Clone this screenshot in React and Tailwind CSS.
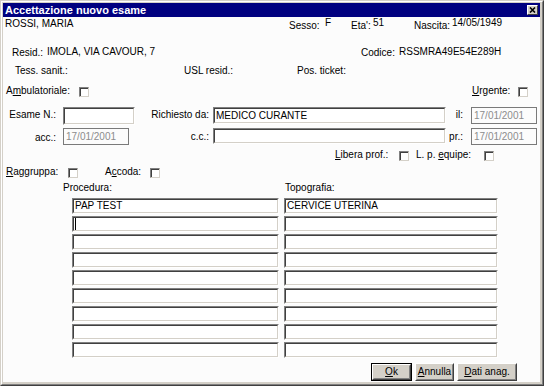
import React from 'react';

// Win2000-style "new exam" acceptance dialog

const Sunken = ({ className = '', children }) => (
    <div className={`shrink-0 border border-t-[#808080] border-l-[#808080] border-r-white border-b-white ${className}`}>
        <div className="h-full flex items-center pl-px overflow-hidden whitespace-nowrap bg-white border border-t-[#404040] border-l-[#404040] border-r-[#d4d0c8] border-b-[#d4d0c8]">
            {children}
        </div>
    </div>
);

const DateBox = ({ className = '' }) => (
    <div className={`shrink-0 flex items-center pl-[2px] border border-[#7a7a7a] bg-[#fcfcfc] text-[#8c8c8c] ${className}`}>
        17/01/2001
    </div>
);

const Check = ({ className = '' }) => (
    <span className={`block shrink-0 w-[10px] h-[10px] bg-white border border-t-[#808080] border-l-[#808080] border-r-[#d4d0c8] border-b-[#d4d0c8] shadow-[inset_1px_1px_0_#404040] ${className}`} />
);

const Button = ({ width, isDefault, children }) => (
    <div className={`shrink-0 h-[18px] ${width} ${isDefault ? 'border border-black' : ''}`}>
        <div className="h-full border border-t-white border-l-white border-r-[#404040] border-b-[#404040] bg-[#d4d0c8]">
            <div className="h-full flex items-center justify-center border border-t-[#d4d0c8] border-l-[#d4d0c8] border-r-[#808080] border-b-[#808080]">
                {children}
            </div>
        </div>
    </div>
);

const CloseBtn = () => (
    <div className="w-[11px] h-[10px] flex items-center justify-center bg-[#d4d0c8] border border-t-white border-l-white border-r-[#404040] border-b-[#404040]">
        <svg width="7" height="6" viewBox="0 0 7 6">
            <path d="M1 0.5 L6 5.5 M6 0.5 L1 5.5" stroke="#000" strokeWidth="1.6" fill="none" />
        </svg>
    </div>
);

const Row = ({ className = '', children }) => (
    <div className={`shrink-0 flex items-start whitespace-nowrap ${className}`}>{children}</div>
);

const procedure = ['PAP TEST', '', '', '', '', '', '', '', ''];
const topografia = ['CERVICE UTERINA', '', '', '', '', '', '', '', ''];

export default function App() {
    return (
        <div className="w-[544px] h-[386px] bg-[#d4d0c8] border border-t-[#d4d0c8] border-l-[#d4d0c8] border-r-[#404040] border-b-[#404040] font-['Liberation_Sans',Arial,sans-serif] text-[10px] leading-[12px] text-black select-none">
            <div className="h-full flex flex-col border border-t-white border-l-white border-r-[#808080] border-b-[#808080] pt-px pl-px pr-[2px] pb-[2px]">
                {/* title bar */}
                <div className="h-[14px] shrink-0 bg-[#000080] flex items-center justify-between pl-[2px] pr-[2px]">
                    <span className="text-white font-bold text-[11px] leading-[14px]">Accettazione nuovo esame</span>
                    <CloseBtn />
                </div>

                <div className="flex-1 bg-[#fcfcfc] flex flex-col">
                    {/* patient header */}
                    <Row className="h-[29px]">
                        <span className="shrink-0 w-[286px] pl-[2px] mt-px">ROSSI, MARIA</span>
                        <span className="shrink-0 w-[36px] mt-[3px]">Sesso:</span>
                        <span className="shrink-0 w-[26px]">F</span>
                        <span className="shrink-0 w-[22px] mt-[3px]">Eta':</span>
                        <span className="shrink-0 w-[41px]">51</span>
                        <span className="shrink-0 w-[38px] mt-[3px]">Nascita:</span>
                        <span>14/05/1949</span>
                    </Row>
                    <Row className="h-[19px] pl-[9px]">
                        <span className="shrink-0 w-[35px] mt-px">Resid.:</span>
                        <span className="shrink-0 w-[314px]">IMOLA, VIA CAVOUR, 7</span>
                        <span className="shrink-0 w-[38px] mt-px">Codice:</span>
                        <span>RSSMRA49E54E289H</span>
                    </Row>
                    <Row className="h-[20px] pl-[12px]">
                        <span className="shrink-0 w-[169px]">Tess. sanit.:</span>
                        <span className="shrink-0 w-[113px]">USL resid.:</span>
                        <span>Pos. ticket:</span>
                    </Row>
                    <Row className="h-[22px] pl-[3px]">
                        <span className="shrink-0 w-[73px]">A<u>m</u>bulatoriale:</span>
                        <Check className="mt-[2px]" />
                        <span className="shrink-0 w-[383px]" />
                        <span className="shrink-0 w-[46px]"><u>U</u>rgente:</span>
                        <Check className="mt-[2px]" />
                    </Row>

                    {/* request fields */}
                    <Row className="h-[21px]">
                        <span className="shrink-0 w-[60px] text-right pr-[7px] mt-[2px]">Esame N.:</span>
                        <Sunken className="w-[72px] h-[18px]" />
                        <span className="shrink-0 w-[78px] text-right pr-[4px] mt-[2px]">Richiesto da:</span>
                        <Sunken className="w-[233px] h-[17px]">MEDICO CURANTE</Sunken>
                        <span className="shrink-0 w-[25px] text-right pr-[8px] mt-[2px]">il:</span>
                        <DateBox className="w-[66px] h-[17px]" />
                    </Row>
                    <Row className="h-[21px]">
                        <span className="shrink-0 w-[60px] text-right pr-[7px] mt-[4px]">acc.:</span>
                        <DateBox className="w-[66px] h-[17px]" />
                        <span className="shrink-0 w-[84px] text-right pr-[4px] mt-[3px]">c.c.:</span>
                        <Sunken className="w-[233px] h-[16px]" />
                        <span className="shrink-0 w-[25px] text-right pr-[8px] mt-[3px]">pr.:</span>
                        <DateBox className="w-[66px] h-[17px]" />
                    </Row>
                    <Row className="h-[17px] pl-[332px]">
                        <span className="shrink-0 w-[64px]"><u>L</u>ibera prof.:</span>
                        <Check className="mt-[2px]" />
                        <span className="shrink-0 w-[68px] ml-[7px]">L. p. <u>e</u>quipe:</span>
                        <Check className="mt-[2px]" />
                    </Row>
                    <Row className="h-[16px] pl-[3px]">
                        <span className="shrink-0 w-[62px]"><u>R</u>aggruppa:</span>
                        <Check className="mt-[2px]" />
                        <span className="shrink-0 w-[45px] ml-[27px]">A<u>c</u>coda:</span>
                        <Check className="mt-[2px]" />
                    </Row>
                    <Row className="h-[16px] pl-[60px]">
                        <span className="shrink-0 w-[222px]">Procedura:</span>
                        <span>Topografia:</span>
                    </Row>

                    {/* procedure / topography grid */}
                    <div className="ml-[69px] grid grid-cols-[207px_214px] gap-x-[5px] gap-y-[2px] auto-rows-[16px]">
                        {procedure.map((p, i) => (
                            <React.Fragment key={i}>
                                <Sunken className="h-[16px]">
                                    {i === 1 ? <span className="block w-px h-[12px] bg-black" /> : p}
                                </Sunken>
                                <Sunken className="h-[16px]">{topografia[i]}</Sunken>
                            </React.Fragment>
                        ))}
                    </div>

                    {/* buttons */}
                    <div className="mt-[5px] flex pl-[368px] gap-[3px]">
                        <Button width="w-[41px]" isDefault><span><u>O</u>k</span></Button>
                        <Button width="w-[39px]"><span><u>A</u>nnulla</span></Button>
                        <Button width="w-[60px]"><span><u>D</u>ati anag.</span></Button>
                    </div>
                </div>
            </div>
        </div>
    );
}
